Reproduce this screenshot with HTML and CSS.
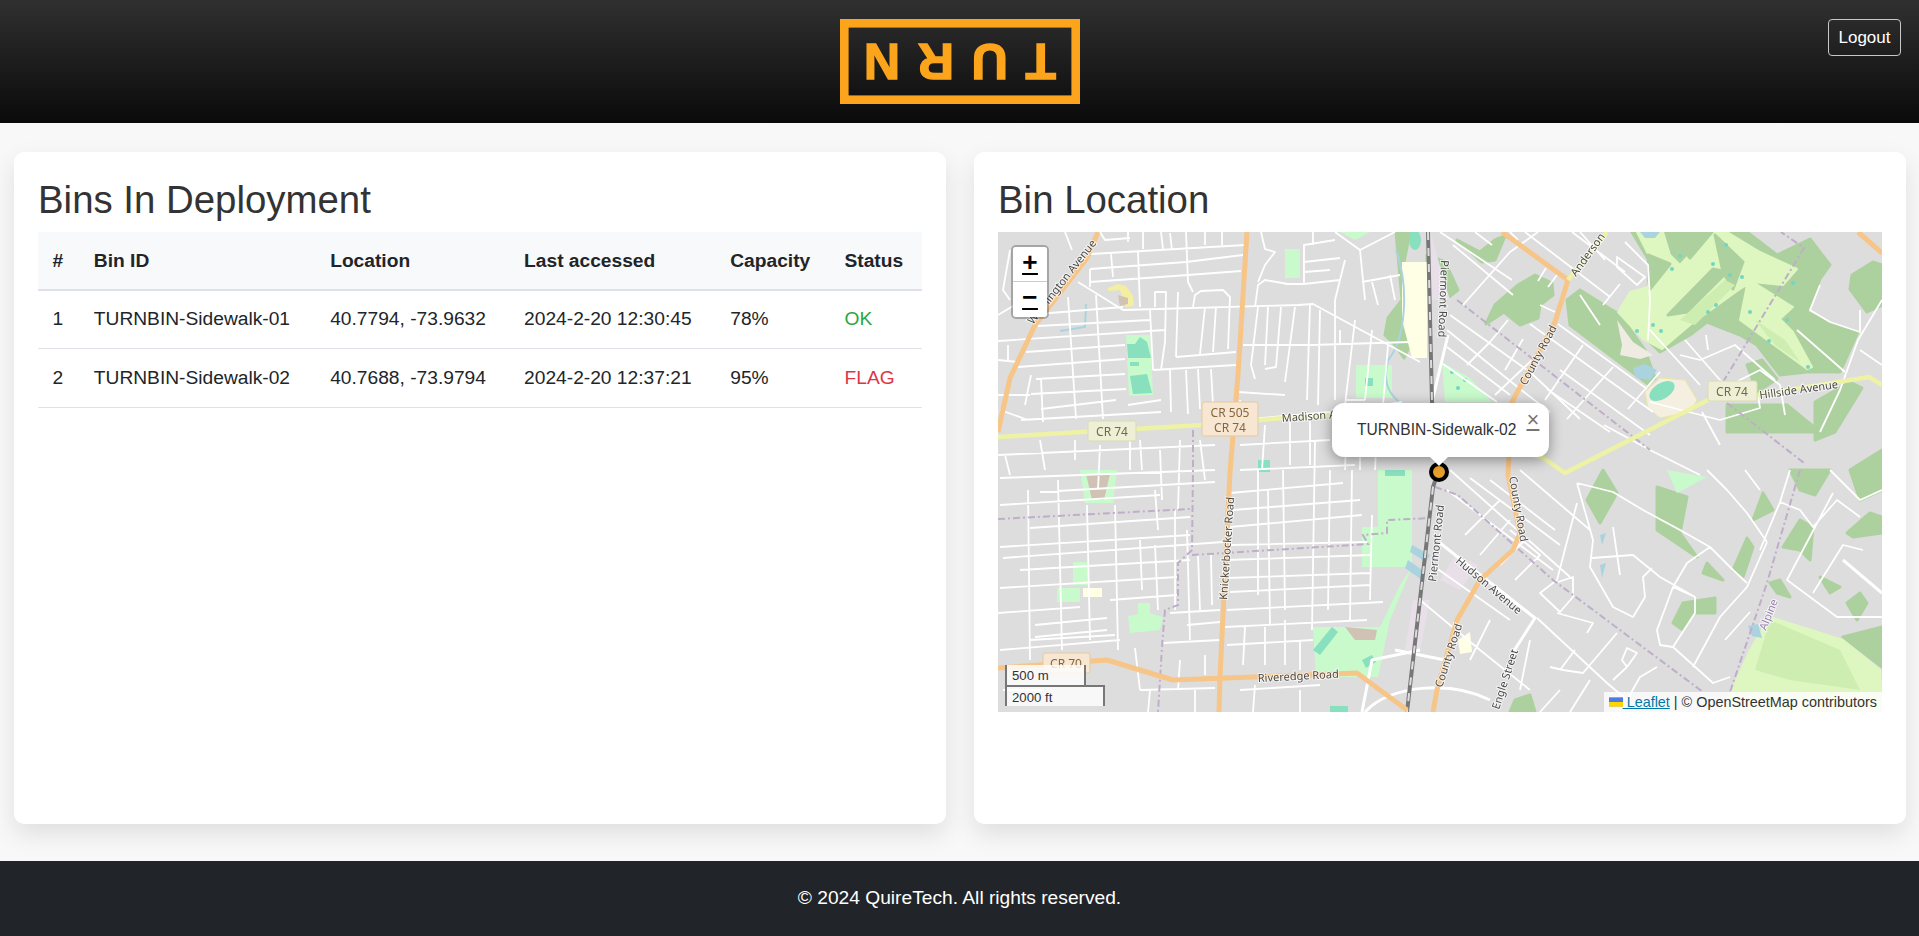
FILE: index.html
```html
<!DOCTYPE html>
<html>
<head>
  <meta charset="utf-8">
  <title>Turn Bins</title>
  <link rel="stylesheet" href="styles.css">
</head>
<body>

  <header class="top-bar">
    <svg class="logo" viewBox="840 19 240 85" width="240" height="85">
      <rect class="logo-frame" x="844.3" y="23.3" width="231.4" height="76.4"></rect>
      <text class="logo-text" transform="rotate(180 960 61)" x="864" y="78" textLength="192">TURN</text>
    </svg>
    <button class="logout-button">Logout</button>
  </header>

  <main class="content">
    <section class="card">
      <h2>Bins In Deployment</h2>
      <table class="bin-table">
        <thead>
          <tr>
            <th>#</th>
            <th>Bin ID</th>
            <th>Location</th>
            <th>Last accessed</th>
            <th>Capacity</th>
            <th>Status</th>
          </tr>
        </thead>
        <tbody>
          <tr>
            <td>1</td>
            <td>TURNBIN-Sidewalk-01</td>
            <td>40.7794, -73.9632</td>
            <td>2024-2-20 12:30:45</td>
            <td>78%</td>
            <td class="status-ok">OK</td>
          </tr>
          <tr>
            <td>2</td>
            <td>TURNBIN-Sidewalk-02</td>
            <td>40.7688, -73.9794</td>
            <td>2024-2-20 12:37:21</td>
            <td>95%</td>
            <td class="status-flag">FLAG</td>
          </tr>
        </tbody>
      </table>
    </section>

    <section class="card">
      <h2>Bin Location</h2>
      <div class="map">
        <svg class="map-tiles" viewBox="998 232 884 480" width="884" height="480">
          <!-- land use -->
          <g class="forest">
            <path d="M1632 232 L1650 262 L1648 289 L1618 312 L1660 352 L1690 335 L1707 322 L1740 335 L1757 345 L1780 375 L1807 372 L1840 372 L1858 332 L1833 325 L1807 312 L1820 279 L1830 265 L1810 239 L1777 255 L1747 232 Z"/>
            <path d="M1567 300 L1580 290 L1620 315 L1645 350 L1655 378 L1648 384 L1570 325 Z"/>
            <path d="M1852 275 L1873 262 L1882 265 L1882 305 L1867 312 L1850 289 Z"/>
            <path d="M1747 365 L1762 360 L1777 379 L1757 392 Z"/>
            <path d="M1727 405 L1787 405 L1820 432 L1727 432 Z"/>
            <path d="M1815 402 L1850 382 L1862 388 L1835 432 L1815 440 Z"/>
            <path d="M1396 232 L1410 232 L1404 262 L1402 320 L1410 345 L1404 358 L1395 345 L1385 335 L1388 318 L1402 300 Z"/>
            <path d="M1427 255 L1445 262 L1458 290 L1445 300 L1427 290 Z"/>
            <path d="M1457 240 L1480 252 L1495 240 L1505 236 L1495 260 L1482 262 Z"/>
            <path d="M1518 285 L1535 275 L1552 283 L1553 295 L1540 305 L1538 318 L1520 325 L1504 312 L1486 324 L1495 305 Z"/>
            <path d="M1587 500 L1603 470 L1617 493 L1600 523 Z"/>
            <path d="M1657 487 L1687 497 L1680 533 L1697 557 L1657 530 Z"/>
            <path d="M1763 493 L1773 510 L1753 520 Z"/>
            <path d="M1747 538 L1753 547 L1743 577 L1733 570 Z"/>
            <path d="M1707 563 L1723 580 L1703 573 Z"/>
            <path d="M1683 603 L1715 598 L1715 613 L1693 613 L1683 630 L1673 623 Z"/>
            <path d="M1783 547 L1800 520 L1813 527 L1810 560 L1800 550 Z"/>
            <path d="M1847 533 L1870 513 L1882 517 L1882 533 L1853 537 Z"/>
            <path d="M1770 583 L1780 580 L1790 597 L1777 593 Z"/>
            <path d="M1847 603 L1860 593 L1867 603 L1857 620 Z"/>
            <path d="M1843 637 L1882 627 L1882 667 Z"/>
            <path d="M1820 577 L1840 587 L1830 593 Z"/>
            <path d="M1790 470 L1830 470 L1815 495 L1800 490 Z"/>
            <path d="M1850 470 L1882 450 L1882 490 L1860 500 Z"/>
            <path d="M1515 700 L1530 695 L1535 712 L1510 712 Z"/>
          </g>
          <path class="golf" d="M1637 232 L1652 262 L1648 287 L1630 292 L1618 312 L1643 339 L1662 349 L1690 325 L1740 289 L1747 285 L1740 320 L1807 369 L1812 367 L1793 332 L1780 319 L1793 307 L1753 282 L1783 285 L1797 269 L1760 252 L1727 232 L1710 232 L1680 265 L1670 255 L1663 232 Z"/>
          <path class="golf" d="M1770 617 L1843 640 L1880 670 L1882 712 L1722 712 L1750 650 Z"/>
          <g class="forest">
            <path d="M1668 315 L1713 269 L1727 272 L1687 312 Z"/>
            <path d="M1648 255 L1670 264 L1650 289 Z"/>
            <path d="M1715 235 L1743 262 L1733 289 L1723 272 Z"/>
            <path d="M1690 232 L1712 232 L1690 258 L1680 245 Z"/>
          </g>
          <g class="fairway">
            <path d="M1680 320 L1725 280 L1735 285 L1695 325 Z"/>
            <path d="M1755 320 L1785 340 L1800 362 L1775 345 Z"/>
            <path d="M1770 620 L1840 650 L1860 690 L1790 680 L1755 670 Z"/>
          </g>
          <path class="sand" d="M1617 320 L1633 342 L1653 355 L1640 359 L1620 355 L1622 345 Z"/>
          <g class="park">
            <path d="M1285 249 L1300 249 L1300 278 L1285 278 Z"/>
            <path d="M1126 335 L1150 335 L1153 395 L1129 396 Z"/>
            <path d="M1356 365 L1392 365 L1392 398 L1356 398 Z"/>
            <path d="M1442 362 L1470 378 L1492 402 L1445 402 Z"/>
            <path d="M1378 470 L1412 470 L1412 567 L1362 567 L1362 527 L1378 527 Z"/>
            <path d="M1313 627 L1380 627 L1400 585 L1412 567 L1390 620 L1378 677 L1316 677 Z"/>
            <path d="M1080 470 L1117 470 L1113 503 L1085 503 Z"/>
            <path d="M1073 562 L1088 562 L1088 585 L1073 585 Z"/>
            <path d="M1057 588 L1080 588 L1080 602 L1057 602 Z"/>
            <path d="M1138 603 L1150 603 L1150 613 L1163 617 L1160 630 L1130 633 L1128 616 L1138 614 Z"/>
            <path d="M1667 470 L1707 477 L1677 493 Z"/>
            <path d="M1340 232 L1370 232 L1355 240 Z"/>
          </g>
          <g class="pitch">
            <path d="M1127 344 L1135 344 L1140 337 L1147 342 L1151 358 L1128 358 Z"/>
            <path d="M1130 362 L1139 362 L1139 366 L1130 366 Z"/>
            <path d="M1130 376 L1147 374 L1152 393 L1133 394 Z"/>
            <path d="M1404 262 L1421 262 L1421 275 L1404 275 Z"/>
            <path d="M1365 378 L1373 378 L1373 386 L1365 386 Z"/>
            <path d="M1385 470 L1405 470 L1405 476 L1385 476 Z"/>
            <path d="M1258 460 L1270 460 L1270 472 L1258 472 Z"/>
            <path d="M1313 650 L1332 627 L1338 632 L1320 655 Z"/>
            <path d="M1362 660 L1372 655 L1376 662 L1366 668 Z"/>
            <path d="M1330 706 L1348 706 L1348 712 L1330 712 Z"/>
            <ellipse cx="1415" cy="240" rx="6" ry="10"/>
          </g>
          <g class="teal-dots">
            <circle cx="1680" cy="256" r="2"/><circle cx="1672" cy="269" r="2"/><circle cx="1713" cy="264" r="2"/>
            <circle cx="1742" cy="277" r="2"/><circle cx="1793" cy="283" r="2"/><circle cx="1716" cy="305" r="2"/>
            <circle cx="1708" cy="312" r="2"/><circle cx="1653" cy="325" r="2"/><circle cx="1661" cy="331" r="2"/>
            <circle cx="1637" cy="331" r="2"/><circle cx="1750" cy="312" r="2"/><circle cx="1787" cy="320" r="2"/>
            <circle cx="1769" cy="341" r="2"/><circle cx="1808" cy="367" r="2"/><circle cx="1726" cy="245" r="2"/>
            <circle cx="1730" cy="275" r="2"/><circle cx="1452" cy="372" r="2"/><circle cx="1465" cy="380" r="2"/>
            <circle cx="1458" cy="388" r="2"/>
          </g>
          <path class="school" d="M1402 262 L1427 262 L1427 358 L1412 358 L1402 320 Z"/>
          <path class="school-ring" d="M1108 288 L1118 284 L1126 286 L1133 296 L1134 306 L1125 307 L1120 290 L1108 291 Z"/>
          <path class="school" d="M1083 588 L1102 588 L1102 597 L1083 597 Z"/>
          <path class="school" d="M1458 640 L1470 632 L1472 652 L1460 654 Z"/>
          <path class="building" d="M1118 295 L1128 298 L1128 304 L1120 306 Z"/>
          <path class="building" d="M1345 627 L1377 630 L1375 640 L1355 640 Z"/>
          <path class="building" d="M1086 474 L1110 474 L1104 500 L1092 500 Z"/>
          <path class="campus" d="M1413 600 L1430 600 L1420 650 L1405 650 Z"/>
          <path class="campus" d="M1455 555 L1478 565 L1460 590 L1440 580 Z"/>
          <path class="campus" d="M1427 232 L1430 232 L1450 300 L1427 300 Z"/>
          <path class="stadium" d="M1660 378 L1685 380 L1697 400 L1690 412 L1660 418 L1648 408 L1645 392 Z"/>
          <ellipse class="pitch-oval" cx="1662" cy="391" rx="14" ry="8" transform="rotate(-32 1662 391)"></ellipse>
          <g class="water">
            <path d="M1633 368 L1645 364 L1657 370 L1650 380 L1636 378 Z"/>
            <path d="M1412 545 L1430 555 L1426 562 L1410 552 Z"/>
            <path d="M1408 560 L1425 572 L1422 580 L1405 568 Z"/>
            <path d="M1748 626 L1758 624 L1762 638 L1752 636 Z"/>
            <path d="M1600 535 L1606 533 L1602 545 Z"/>
            <path d="M1600 565 L1606 563 L1602 578 Z"/>
            <path d="M1640 232 L1660 232 L1655 238 L1645 238 Z"/>
          </g>
          <path class="stream" d="M1396 250 C1410 290 1405 340 1388 360 C1380 390 1395 400 1415 415"/>
          <path class="stream" d="M1086 304 L1085 327 L1060 331"/>

          <!-- streets north-west, traced block by block -->
          <path class="road" d="M1091 254 L1245 245 M1090 269 L1186 262 L1243 255 M1090 282 L1188 275 L1241 271 M1078 282 L1123 310 L1298 305 L1313 304 L1420 362
            M1038 314 L1123 307 M1038 326 L1150 320 M998 341 L1165 330 M1026 352 L1125 345 M1018 367 L1125 359 M1036 379 L1125 374 M1031 394 L1126 389 M1041 409 L1116 400 M1128 405 L1161 400 M1021 420 L1161 412 M1153 370 L1236 365 M1176 357 L1236 352
            M1111 254 L1113 277 M1138 252 L1140 307 M1186 232 L1188 282 L1193 292 M1161 232 L1163 249 M1143 232 L1143 249 M1090 269 L1090 287
            M1096 295 L1103 419 M1068 297 L1076 419 M1150 310 L1153 370 M1155 307 L1155 292 L1166 292 L1165 342 L1161 370 M1178 292 L1176 357
            M1193 307 L1195 295 L1201 291 L1223 290 L1230 297 L1228 349 M1205 307 L1200 354 M1216 307 L1213 352
            M1170 370 L1171 412 M1186 370 L1188 414 M1198 369 L1200 409 M1211 369 L1213 405 M1041 379 L1043 422 M1031 375 L1025 405
            M1100 232 L1105 240 L1130 238 M1065 232 L1072 250 M1010 250 L1003 290 L1010 300 M998 315 L1040 290 M998 360 L1018 362 M1008 345 L1008 360 M998 395 L1030 395
            M1000 410 L1028 420 M1170 233 L1172 250 M1205 232 L1205 245 M1222 232 L1222 245 M1128 232 L1128 242"/>
          <!-- between Knickerbocker and the railway -->
          <path class="road" d="M1258 307 L1251 365 L1255 379 M1268 307 L1265 365 M1265 369 L1276 367 L1281 307 M1295 307 L1285 382 M1255 307 L1258 285 L1265 280 L1288 284 M1261 232 L1265 249 L1275 252 L1265 265 L1258 282
            M1243 345 L1312 345 L1410 342 M1238 392 L1285 395 M1285 284 L1304 284 L1340 280 M1304 284 L1304 245 L1335 240 M1304 262 L1340 258 M1304 272 L1330 270 M1313 232 L1313 245 M1335 232 L1360 250 L1365 300 M1345 260 L1335 300 L1335 400 M1310 304 L1307 400 M1320 310 L1318 405 M1355 320 L1345 405 M1372 330 L1365 400 M1388 345 L1383 405 L1402 402
            M1362 282 L1400 275 M1372 282 L1378 305 M1390 275 L1395 300 M1340 345 L1340 330 M1395 232 L1360 250 M1345 400 L1365 400"/>
          <!-- south-west grid -->
          <path class="road" d="M998 455 L1215 445 M1000 478 L1215 470 M1040 492 L1215 482 M1000 505 L1160 495 M1030 528 L1190 517 M1000 547 L1190 535 M1003 558 L1223 542 M1020 570 L1190 560 M1000 588 L1177 577 M998 613 L1080 607 M1035 625 L1107 618 M1035 637 L1107 630 M1000 650 L1120 640 M1170 613 L1220 610 M1187 625 L1220 622 M1163 643 L1220 640 M1110 600 L1177 595 M1003 690 L1045 690
            M1028 490 L1030 660 M1058 480 L1062 650 M1087 505 L1090 640 M1115 505 L1118 650 M1155 490 L1158 530 M1175 510 L1175 610 M1187 530 L1190 640 M1198 555 L1200 610 M1211 555 L1212 605 M1155 545 L1158 610 M1140 540 L1142 590 M1130 440 L1130 470 M1140 440 L1142 470 M1160 450 L1162 500 M1180 440 L1178 510 M1200 440 L1205 480 M1040 440 L1045 470 M1075 440 L1075 460 M1100 445 L1098 490 M1005 455 L1010 475
            M1030 640 L1115 635 M1135 648 L1140 690 M1140 690 L1215 688 M1180 660 L1178 690 M1205 655 L1205 675 M1150 690 L1148 712 M1195 690 L1195 712"/>
          <path class="road" d="M1233 510 L1360 500 M1230 493 L1343 483 M1230 527 L1362 515 M1230 545 L1367 542 M1227 560 L1370 555 M1228 578 L1370 573 M1230 592 L1370 585 M1227 610 L1383 602 M1225 627 L1367 620 M1227 645 L1313 640 M1240 420 L1330 412 M1240 445 L1330 440 M1240 470 L1355 465
            M1258 470 L1258 595 M1268 490 L1270 625 M1283 470 L1285 610 M1315 440 L1312 630 M1330 470 L1328 610 M1352 470 L1350 620 M1372 515 L1370 600 M1240 400 L1240 425 M1265 425 L1262 470 M1290 420 L1290 465 M1310 418 L1310 465 M1245 627 L1243 665 M1265 627 L1265 665 M1285 620 L1285 665 M1300 640 L1300 670 M1240 690 L1320 685 M1255 685 L1253 712 M1300 690 L1300 712
            M1345 470 L1347 415 M1360 410 L1360 470 M1375 470 L1378 410"/>
          <!-- east of the railway, north -->
          <path class="road" d="M1453 245 L1513 295 M1525 232 L1610 297 M1572 232 L1625 272 M1450 315 L1530 372 L1580 419 M1447 330 L1520 389 L1550 412 M1447 347 L1510 395 M1443 364 L1497 402 M1530 324 L1653 412 M1540 305 L1555 312 M1558 324 L1647 389 M1547 389 L1610 432 M1560 370 L1650 435 M1440 232 L1512 280
            M1463 305 L1510 252 L1538 232 M1475 232 L1492 245 M1467 365 L1490 342 L1508 320 M1505 370 L1523 339 M1495 395 L1532 360 M1545 400 L1583 345 M1567 419 L1613 367 M1628 409 L1660 372 M1538 281 L1546 268 M1548 287 L1557 275
            M1603 305 L1620 284 M1617 257 L1645 277 L1637 285 L1617 267 Z M1625 242 L1648 265 L1650 300 L1648 340 M1580 295 L1600 325 M1580 232 L1605 260
            M1650 330 L1700 385 M1685 340 L1720 380 L1730 385 L1760 370 L1780 385 L1785 415 M1680 355 L1700 360 L1735 345 L1775 380 M1706 335 L1708 350 M1797 330 L1845 372 M1820 285 L1810 310 L1830 322 L1860 332 L1860 310 M1882 300 L1858 340 L1840 390 L1820 432
            M1860 350 L1882 365 M1510 232 L1518 240 M1604 425 L1650 450 L1700 475 M1650 402 L1720 420 L1760 408 L1758 395 M1702 412 L1720 445"/>
          <!-- east of the railway, south -->
          <path class="road" d="M1450 470 L1570 577 M1447 490 L1553 570 M1490 480 L1555 530 M1470 478 L1560 545 M1520 470 L1590 530 M1440 543 L1533 617 M1537 618 L1607 683 L1627 700 M1432 565 L1510 620 M1420 600 L1480 650 L1530 690 M1465 535 L1500 500 M1480 555 L1510 520 M1500 565 L1525 540 M1515 580 L1540 555 L1510 530
            M1767 542 L1747 513 L1727 490 L1707 470 M1767 542 L1747 587 L1720 617 L1693 667 M1747 583 L1733 570 L1710 547 L1687 563 L1673 587 L1657 630 L1660 645 L1673 647 L1695 613 L1695 597 L1673 587 M1673 647 L1713 683 L1730 677
            M1577 483 L1593 540 L1590 567 L1613 607 L1633 617 L1645 597 L1643 577 L1652 568 M1592 558 L1633 555 L1660 577 L1695 597 M1613 527 L1620 575 M1577 483 L1613 492 L1643 510 L1680 530 L1710 547 M1577 503 L1557 580 L1540 593 L1560 612 L1573 597 L1573 577 L1558 582 M1557 613 L1593 623 L1587 633
            M1617 633 L1583 673 L1563 670 L1550 667 M1657 667 L1640 677 L1627 700 M1627 648 L1637 653 L1627 667 L1622 660 Z M1627 667 L1613 680 M1575 650 L1560 670 M1530 640 L1520 690 M1490 620 L1470 660 M1560 690 L1540 712 M1590 680 L1570 712
            M1833 493 L1787 580 L1837 617 L1882 617 M1863 550 L1843 545 L1813 593 M1780 502 L1800 510 L1813 527 L1837 500 L1860 517 M1780 502 L1760 550 M1830 470 L1860 500 L1882 490 M1790 470 L1780 502 M1745 470 L1760 490 M1725 640 L1750 612"/>
          <path class="road road-wide" d="M1448 335 L1432 402 M1440 543 L1535 618 L1510 657 M1843 560 L1882 593 M1395 650 L1445 660"/>
          <path class="road road-wide" d="M1420 650 L1372 660 L1362 712 M1365 712 C1390 685 1450 680 1490 700"/>

          <!-- boundaries -->
          <path class="boundary" d="M998 519 L1190 509 M1193 430 L1193 470 L1192 550 L1178 563 L1178 605 L1165 610 L1162 647 L1158 712 M1192 555 L1368 544 L1363 535 L1387 533 L1387 520 L1433 518
            M1435 487 L1458 495 L1553 580 L1703 692 M1457 300 L1650 450 M1800 470 L1767 583 L1730 692 M1723 382 L1804 248 L1781 232 M1727 403 L1804 463"/>

          <!-- railway -->
          <path class="rail" d="M1428 232 L1432 402 L1439 470 L1433 487 L1407 712"/>
          <path class="rail-dash" d="M1428 232 L1432 402 L1439 470 L1433 487 L1407 712"/>

          <!-- main roads -->
          <g class="secondary">
            <path d="M1098 232 L1087 258 L1035 325 L1010 378 L998 432"/>
            <path d="M1247 232 L1238 375 L1230 472 L1220 677 L1219 712"/>
            <path d="M1502 232 L1568 280 L1555 322 L1512 402 L1508 475 L1520 533 L1513 550 L1480 580 L1457 620 L1437 690 L1433 712"/>
            <path d="M1858 232 L1882 253"/>
            <path d="M998 668 L1107 660 L1173 680 L1357 673 L1407 710"/>
          </g>
          <g class="tertiary">
            <path d="M998 437 L1203 425 L1283 418 L1333 415 L1542 457 L1565 473 L1708 400 L1758 395 L1869 377 L1882 385"/>
            <path d="M1568 280 L1607 232"/>
          </g>

          <!-- road labels -->
          <g class="label">
            <text transform="translate(1033 325) rotate(-52)">Washington Avenue</text>
            <text transform="translate(1282 422) rotate(-4)">Madison Avenue</text>
            <text transform="translate(1441 260) rotate(92)">Piermont Road</text>
            <text transform="translate(1526 386) rotate(-62)">County Road</text>
            <text transform="translate(1576 277) rotate(-54)">Anderson</text>
            <text transform="translate(1760 399) rotate(-8)">Hillside Avenue</text>
            <text transform="translate(1227 600) rotate(-86)">Knickerbocker Road</text>
            <text transform="translate(1258 682) rotate(-3)">Riveredge Road</text>
            <text transform="translate(1436 582) rotate(-84)">Piermont Road</text>
            <text transform="translate(1442 688) rotate(-72)">County Road</text>
            <text transform="translate(1509 477) rotate(80)">County Road</text>
            <text transform="translate(1455 562) rotate(40)">Hudson Avenue</text>
            <text transform="translate(1499 710) rotate(-72)">Engle Street</text>
            <text class="label-purple" transform="translate(1766 631) rotate(-68)">Alpine</text>
          </g>

          <!-- route shields -->
          <rect class="shield shield-green" x="1088" y="421" width="48" height="20" rx="2"></rect>
          <text class="shield-text shield-text-green" x="1112" y="436">CR 74</text>
          <rect class="shield shield-tan" x="1202" y="402" width="56" height="34" rx="2"></rect>
          <text class="shield-text shield-text-tan" x="1230" y="417">CR 505</text>
          <text class="shield-text shield-text-tan" x="1230" y="432">CR 74</text>
          <rect class="shield shield-green" x="1708" y="381" width="49" height="20" rx="2"></rect>
          <text class="shield-text shield-text-green" x="1732" y="396">CR 74</text>
          <rect class="shield shield-tan" x="1043" y="653" width="47" height="20" rx="2"></rect>
          <text class="shield-text shield-text-tan" x="1066" y="668">CR 70</text>
        </svg>

        <span class="bin-marker"></span>

        <div class="zoom-control">
          <a class="zoom-button">+</a>
          <a class="zoom-button">−</a>
        </div>

        <div class="popup">
          <a class="popup-close">×</a>
          TURNBIN-Sidewalk-02
          <span class="popup-tip"></span>
        </div>

        <div class="scale-control">
          <div class="scale-line scale-metric">500 m</div>
          <div class="scale-line scale-feet">2000 ft</div>
        </div>

        <div class="attribution">
          <a><svg class="flag" viewBox="0 0 12 8" width="14" height="10"><path fill="#4C7BE1" d="M0 0h12v4H0z"></path><path fill="#FFD500" d="M0 4h12v3H0z"></path><path fill="#E0BC00" d="M0 7h12v1H0z"></path></svg> Leaflet</a>
          | © OpenStreetMap contributors
        </div>
      </div>
    </section>
  </main>

  <footer class="footer">© 2024 QuireTech. All rights reserved.</footer>

</body>
</html>
```

FILE: styles.css
```css
* {
  box-sizing: border-box;
}
body {
  margin: 0;
  font-family: "Liberation Sans", Arial, sans-serif;
  font-size: 19.2px;
  line-height: 1.5;
  color: #212529;
  background-color: #f8f8f8;
  height: 936px;
  display: flex;
  flex-direction: column;
}
.top-bar {
  position: relative;
  height: 123px;
  flex: none;
  display: flex;
  justify-content: center;
  padding-top: 19px;
  background: linear-gradient(to bottom, #303030, #0a0a0a);
}
.logo {
  display: block;
}
.logo-frame {
  fill: none;
  stroke: #fca51c;
  stroke-width: 8.6;
}
.logo-text {
  fill: #fca51c;
  stroke: #fca51c;
  stroke-width: 1.5px;
  font-family: "Liberation Sans", Arial, sans-serif;
  font-weight: bold;
  font-size: 50px;
}
.logout-button {
  position: absolute;
  top: 19px;
  right: 18px;
  width: 73px;
  height: 37px;
  padding: 0;
  font-family: inherit;
  font-size: 17px;
  color: #fff;
  background: transparent;
  border: 1px solid #c8c8c8;
  border-radius: 4px;
}
.content {
  flex: 1;
  display: grid;
  grid-template-columns: 932px 932px;
  gap: 28px;
  padding: 29px 13px 37px 14px;
}
.card {
  background-color: #fff;
  border-radius: 10px;
  padding: 24px;
  box-shadow: 0 10px 24px rgba(0, 0, 0, 0.1);
}
h2 {
  margin: 0;
  font-size: 38.4px;
  font-weight: 400;
  line-height: 48px;
  color: #333;
  height: 56px;
}
.bin-table {
  width: 100%;
  border-collapse: collapse;
}
.bin-table th,
.bin-table td {
  padding: 14.4px;
  text-align: left;
  white-space: nowrap;
  border-bottom: 1px solid #dee2e6;
}
.bin-table th {
  padding-top: 15px;
  padding-bottom: 13px;
  background-color: #f8f9fa;
  font-weight: bold;
  border-bottom-width: 2px;
}
.status-ok {
  color: #28a745;
}
.status-flag {
  color: #dc3545;
}
.map {
  position: relative;
  width: 884px;
  height: 480px;
  overflow: hidden;
  background-color: #dddddd;
}
.map-tiles {
  display: block;
  filter: blur(0.35px);
}
.forest { fill: #add19e; stroke: #add19e; stroke-width: 3; stroke-linejoin: round; }
.golf { fill: #def6c0; stroke: #def6c0; stroke-width: 2; stroke-linejoin: round; }
.fairway { fill: #cdeeb0; }
.sand { fill: #efeae2; }
.park { fill: #c8facc; }
.pitch, .pitch-oval { fill: #88e0be; }
.teal-dots { fill: #72d6c2; }
.school { fill: #ffffe5; }
.school-ring { fill: #f3eea0; }
.building { fill: #d0c2b4; }
.campus { fill: #e8dfe8; }
.stadium { fill: #f4efe0; stroke: #ece6a0; }
.water { fill: #aad3df; }
.stream {
  fill: none;
  stroke: #aad3df;
  stroke-width: 2;
}
.road {
  fill: none;
  stroke: #ffffff;
  stroke-width: 1.8;
  stroke-linejoin: round;
}
.road-wide {
  stroke-width: 3;
}
.boundary {
  fill: none;
  stroke: #bfaec9;
  stroke-width: 2;
  stroke-dasharray: 7 3 2 3;
}
.rail {
  fill: none;
  stroke: #777;
  stroke-width: 4;
}
.rail-dash {
  fill: none;
  stroke: #ddd;
  stroke-width: 2;
  stroke-dasharray: 8 8;
}
.secondary path {
  fill: none;
  stroke: #f7c587;
  stroke-width: 5;
  stroke-linejoin: round;
}
.tertiary path {
  fill: none;
  stroke: #eef2a4;
  stroke-width: 4.5;
  stroke-linejoin: round;
}
.label text {
  font-family: "Noto Sans", sans-serif;
  font-size: 11px;
  fill: #4a4a4a;
  stroke: rgba(255, 255, 255, 0.7);
  stroke-width: 2px;
  paint-order: stroke;
}
.label .label-purple {
  fill: #9a7fb0;
}
.shield {
  stroke-width: 1;
}
.shield-green {
  fill: #eeefd6;
  stroke: #d8dcb0;
}
.shield-tan {
  fill: #f6e6d2;
  stroke: #e6c9a0;
}
.shield-text {
  font-family: "Noto Sans", sans-serif;
  font-size: 12px;
  text-anchor: middle;
}
.shield-text-green {
  fill: #6b7042;
}
.shield-text-tan {
  fill: #85673f;
}
.bin-marker {
  position: absolute;
  left: 431px;
  top: 230px;
  width: 20px;
  height: 20px;
  border: 4px solid #000;
  border-radius: 50%;
  background-color: #e8a02a;
}
.zoom-control {
  position: absolute;
  top: 13px;
  left: 13px;
  width: 38px;
  border: 2px solid rgba(0, 0, 0, 0.25);
  border-radius: 5px;
  background-clip: padding-box;
}
.zoom-button {
  display: block;
  height: 35px;
  line-height: 35px;
  text-align: center;
  font-family: "Liberation Mono", monospace;
  font-size: 26.4px;
  font-weight: bold;
  color: #000;
  text-decoration: underline;
  background-color: #fff;
}
.zoom-button:first-child {
  border-bottom: 1px solid #ccc;
  border-radius: 3px 3px 0 0;
}
.zoom-button:last-child {
  border-radius: 0 0 3px 3px;
}
.popup {
  position: absolute;
  top: 171px;
  left: 334px;
  width: 217px;
  height: 54px;
  padding: 17px 0 0 25px;
  font-size: 15.6px;
  line-height: 20px;
  white-space: nowrap;
  color: #333;
  background-color: #fff;
  border-radius: 12px;
  box-shadow: 0 3px 14px rgba(0, 0, 0, 0.4);
}
.popup-tip {
  position: absolute;
  left: 98px;
  bottom: -9px;
  width: 18px;
  height: 18px;
  background-color: #fff;
  transform: rotate(45deg) scale(0.7);
}
.popup-close {
  position: absolute;
  top: 6px;
  right: 4px;
  width: 24px;
  height: 24px;
  line-height: 24px;
  text-align: center;
  font-family: "Liberation Mono", monospace;
  font-size: 21.6px;
  color: #757575;
  text-decoration: underline;
}
.scale-control {
  position: absolute;
  left: 7px;
  bottom: 6px;
  font-size: 13.2px;
  line-height: 18px;
  color: #333;
}
.scale-line {
  padding: 2px 5px 1px;
  height: 21px;
  white-space: nowrap;
  background-color: rgba(255, 255, 255, 0.8);
  border: 2px solid #777;
  border-top: none;
}
.scale-metric {
  width: 81px;
  border-bottom: none;
  height: 20px;
}
.scale-feet {
  width: 100px;
  border-top: 2px solid #777;
  border-bottom: none;
}
.attribution {
  position: absolute;
  right: 0;
  bottom: 0;
  height: 20px;
  padding: 0 5px;
  font-size: 14.4px;
  line-height: 20px;
  color: #333;
  background-color: rgba(255, 255, 255, 0.8);
}
.attribution a {
  color: #0078a8;
  text-decoration: underline;
}
.flag {
  display: inline-block;
}
.footer {
  height: 75px;
  flex: none;
  display: flex;
  align-items: center;
  justify-content: center;
  color: #fff;
  background-color: #212529;
}
```
